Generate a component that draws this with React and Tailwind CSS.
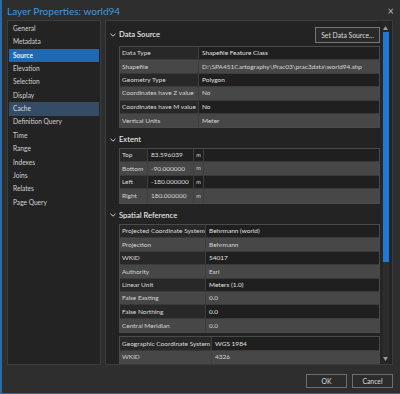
import React from 'react';

const navItems = [
  'General', 'Metadata', 'Source', 'Elevation', 'Selection', 'Display', 'Cache',
  'Definition Query', 'Time', 'Range', 'Indexes', 'Joins', 'Relates', 'Page Query',
];

const dataSource = [
  ['Data Type', 'Shapefile Feature Class'],
  ['Shapefile', 'D:\\SPA451Cartography\\Prac03\\prac3data\\world94.shp'],
  ['Geometry Type', 'Polygon'],
  ['Coordinates have Z value', 'No'],
  ['Coordinates have M value', 'No'],
  ['Vertical Units', 'Meter'],
];

const extent = [
  ['Top', '83.596039'],
  ['Bottom', '-90.000000'],
  ['Left', '-180.000000'],
  ['Right', '180.000000'],
];

const projected = [
  ['Projected Coordinate System', 'Behrmann (world)'],
  ['Projection', 'Behrmann'],
  ['WKID', '54017'],
  ['Authority', 'Esri'],
  ['Linear Unit', 'Meters (1.0)'],
  ['False Easting', '0.0'],
  ['False Northing', '0.0'],
  ['Central Meridian', '0.0'],
];

const geographic = [
  ['Geographic Coordinate System', 'WGS 1984'],
  ['WKID', '4326'],
];

const Chevron = () => (
  <svg width="6" height="4" viewBox="0 0 6 4" className="mr-[2px]">
    <path d="M0.5 0.8 L3 3.2 L5.5 0.8" fill="none" stroke="#cfcfcf" strokeWidth="1" />
  </svg>
);

const SectionHeader = ({ title, children, className = '' }) => (
  <div className={`flex items-center ${className}`}>
    <div className="flex items-center pl-[4px] gap-[1px]">
      <Chevron />
      <span className="text-[7.6px] font-semibold text-[#e4e4e4]">{title}</span>
    </div>
    <div className="flex-1" />
    {children}
  </div>
);

// rows alternate dark / light, first row is dark
const PropTable = ({ rows, labelW, className = '' }) => (
  <div className={`ml-[13px] border border-[#4a4a4a] text-[6.5px] ${className}`}>
    {rows.map(([k, v], i) => {
      const light = i % 2 === 1;
      return (
        <div
          key={k + i}
          className={`flex h-[13.4px] border-b border-[#3a3a3a] last:border-b-0 ${light ? 'bg-[#474747]' : 'bg-[#1f1f1f]'}`}
        >
          <div
            className={`flex items-center px-[2px] border-r border-[#3e3e3e] whitespace-nowrap overflow-hidden ${light ? 'text-[#d4d4d4]' : 'bg-[#282828] text-[#dcdcdc]'} ${labelW}`}
          >
            {k}
          </div>
          <div className={`flex-1 flex items-center px-[3px] whitespace-nowrap overflow-hidden ${light ? 'text-[#d6d6d6]' : 'text-[#e0e0e0]'}`}>
            {v}
          </div>
        </div>
      );
    })}
  </div>
);

const ExtentTable = () => (
  <div className="ml-[13px] border border-[#4a4a4a] text-[6.5px]">
    {extent.map(([k, v], i) => {
      const light = i % 2 === 1;
      return (
        <div
          key={k}
          className={`flex h-[13.4px] border-b border-[#3a3a3a] last:border-b-0 ${light ? 'bg-[#474747] text-[#d4d4d4]' : 'bg-[#1f1f1f] text-[#dedede]'}`}
        >
          <div className={`w-[28px] flex items-center px-[2px] border-r border-[#3e3e3e] ${light ? '' : 'bg-[#282828]'}`}>{k}</div>
          <div className="w-[46px] flex items-center px-[3px] border-r border-[#3e3e3e] whitespace-nowrap">{v}</div>
          <div className="w-[10px] flex items-center justify-center border-r border-[#3e3e3e] text-[5.5px]">m</div>
          <div className="flex-1" />
        </div>
      );
    })}
  </div>
);

export default function App() {
  return (
    <div className="w-[400px] h-[394px] bg-[#2e2e2e] flex flex-col border-l-[2px] border-b border-[#2f6aa3] font-['Segoe_UI','Lato',sans-serif] text-[6.6px] overflow-hidden">
      {/* Title bar */}
      <div className="h-[20px] flex items-center pl-[5px] pr-[6px] pt-[3px]">
        <span className="text-[10px] text-[#4599df]">Layer Properties: world94</span>
        <div className="flex-1" />
        <span className="text-[11px] leading-none text-[#b8b8b8] -mt-[3px]">×</span>
      </div>

      {/* Body */}
      <div className="flex gap-[4px] pl-[5px] pr-[7px] h-[345px]">
        {/* Left nav */}
        <div className="w-[94px] bg-[#232323] border border-[#3c3c3c] pt-[1px] px-[1px]">
          {navItems.map((item) => (
            <div
              key={item}
              className={`h-[13.4px] flex items-center pl-[4px] ${
                item === 'Source'
                  ? 'bg-[#1f69b4] text-white font-semibold'
                  : item === 'Cache'
                  ? 'bg-[#344c66] text-[#dcdcdc]'
                  : 'text-[#d2d2d2]'
              }`}
            >
              {item}
            </div>
          ))}
        </div>

        {/* Right content */}
        <div className="flex-1 bg-[#232323] border border-[#3c3c3c] flex overflow-hidden">
          <div className="flex-1 flex flex-col pt-[6px] overflow-hidden">
            <SectionHeader title="Data Source">
              <button className="h-[16px] w-[65px] border border-[#767676] bg-[#2a2a2a] text-[#dcdcdc] text-[6.8px]">
                Set Data Source...
              </button>
            </SectionHeader>
            <PropTable rows={dataSource} labelW="w-[79px]" className="mt-[3px]" />

            <SectionHeader title="Extent" className="h-[14px] mt-[6px]" />
            <div className="mt-[2px]">
              <ExtentTable />
            </div>

            <SectionHeader title="Spatial Reference" className="h-[14px] mt-[6px]" />
            <PropTable rows={projected} labelW="w-[86px]" className="mt-[3px]" />
            <PropTable rows={geographic} labelW="w-[92px]" className="mt-[3px] border-b-0" />
          </div>

          {/* Scrollbar */}
          <div className="w-[9px] ml-[1px] mr-[2px] flex flex-col items-center pt-[5px] pb-[3px] bg-[#262626]">
            <svg width="5" height="4" viewBox="0 0 5 4">
              <path d="M2.5 0 L5 4 L0 4 Z" fill="#9a9a9a" />
            </svg>
            <div className="w-[6px] h-[230px] bg-[#1f7ad6] mt-[2px]" />
            <div className="flex-1 w-[6px] bg-[#2c2c2c]" />
            <svg width="5" height="4" viewBox="0 0 5 4" className="mt-[1px]">
              <path d="M0 0 L5 0 L2.5 4 Z" fill="#9a9a9a" />
            </svg>
          </div>
        </div>
      </div>

      {/* Footer */}
      <div className="flex-1 flex items-start justify-end gap-[5px] pr-[7px] pt-[9px]">
        <button className="w-[41px] h-[14px] border border-[#6e6e6e] bg-[#2c2c2c] text-[#dcdcdc] text-[6.8px]">OK</button>
        <button className="w-[41px] h-[14px] border border-[#6e6e6e] bg-[#2c2c2c] text-[#dcdcdc] text-[6.8px]">Cancel</button>
      </div>
    </div>
  );
}
